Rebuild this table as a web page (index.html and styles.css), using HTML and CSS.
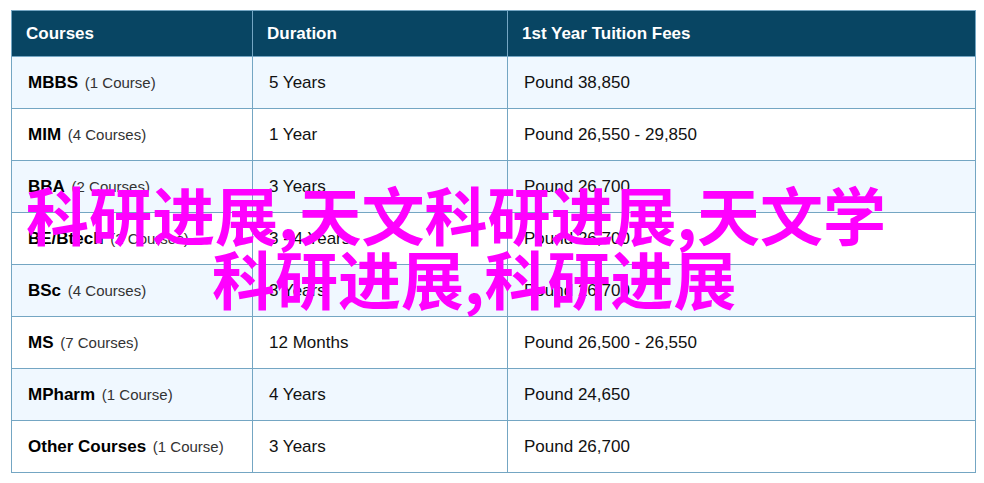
FILE: index.html
```html
<!DOCTYPE html>
<html lang="en">
<head>
<meta charset="utf-8">
<title>Courses</title>
<link rel="stylesheet" href="styles.css">
</head>
<body>
<div class="wrap">
  <table class="fees">
    <colgroup>
      <col class="c1"><col class="c2"><col class="c3">
    </colgroup>
    <thead>
      <tr><th>Courses</th><th>Duration</th><th>1st Year Tuition Fees</th></tr>
    </thead>
    <tbody>
      <tr><td><b>MBBS</b> <span class="n">(1 Course)</span></td><td>5 Years</td><td>Pound 38,850</td></tr>
      <tr><td><b>MIM</b> <span class="n">(4 Courses)</span></td><td>1 Year</td><td>Pound 26,550 - 29,850</td></tr>
      <tr><td><b>BBA</b> <span class="n">(2 Courses)</span></td><td>3 Years</td><td>Pound 26,700</td></tr>
      <tr><td><b>BE/Btech</b> <span class="n">(2 Courses)</span></td><td>3 - 4 Years</td><td>Pound 26,700</td></tr>
      <tr><td><b>BSc</b> <span class="n">(4 Courses)</span></td><td>3 Years</td><td>Pound 26,700</td></tr>
      <tr><td><b>MS</b> <span class="n">(7 Courses)</span></td><td>12 Months</td><td>Pound 26,500 - 26,550</td></tr>
      <tr><td><b>MPharm</b> <span class="n">(1 Course)</span></td><td>4 Years</td><td>Pound 24,650</td></tr>
      <tr><td><b>Other Courses</b> <span class="n">(1 Course)</span></td><td>3 Years</td><td>Pound 26,700</td></tr>
    </tbody>
  </table>
  <div class="overlay">
    <div class="line">科研进展,天文科研进展,天文学</div>
    <div class="line line-2">科研进展,科研进展</div>
  </div>
</div>
</body>
</html>
```

FILE: styles.css
```css
html, body {
  margin: 0;
  padding: 0;
  background: #ffffff;
}
body {
  padding: 10px 0 0 11px;
  font-family: "Liberation Sans", Arial, sans-serif;
  color: #111111;
}
.wrap {
  position: relative;
  width: 964px;
}
.fees {
  width: 964px;
  border-collapse: collapse;
  table-layout: fixed;
}
.c1 { width: 241px; }
.c2 { width: 255px; }
.c3 { width: 468px; }
.fees th,
.fees td {
  border: 1px solid #74a6c3;
  text-align: left;
  vertical-align: middle;
  white-space: nowrap;
}
.fees th {
  background: #084563;
  color: #ffffff;
  font-weight: 700;
  font-size: 17px;
  height: 46px;
  padding: 0 14px;
  box-sizing: border-box;
}
.fees td {
  height: 52px;
  padding: 0 16px;
  font-size: 17px;
  box-sizing: border-box;
}
.fees tbody tr:nth-child(odd) td {
  background: #f0f8ff;
}
.fees tbody tr:nth-child(even) td {
  background: #ffffff;
}
.fees b {
  font-weight: 700;
  color: #000000;
}
.n {
  font-size: 15px;
  color: #333333;
  margin-left: 2px;
}
.overlay {
  position: absolute;
  left: 15px;
  top: 171px;
  font-family: "Noto Sans CJK SC", sans-serif;
  font-weight: 700;
  font-size: 63px;
  line-height: 64px;
  color: #ff00ff;
  white-space: nowrap;
  pointer-events: none;
}
.line-2 {
  padding-left: 186px;
}
```
